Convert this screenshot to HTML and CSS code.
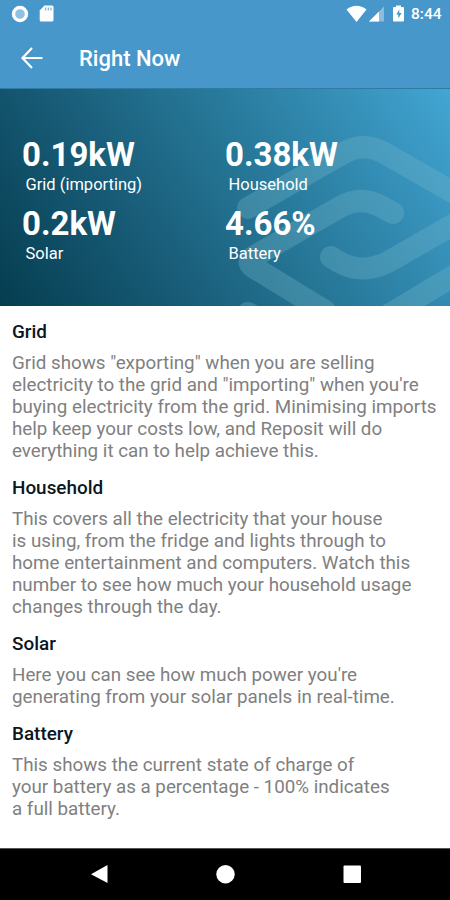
FILE: index.html
```
<!DOCTYPE html>
<html lang="en">
<head>
<meta charset="utf-8">
<title>Right Now</title>
<link rel="stylesheet" href="styles.css">
</head>
<body>
<div class="screen">
  <header class="top">
    <div class="status">
      <svg class="status-left" width="60" height="28" viewBox="0 0 60 28">
        <circle cx="20" cy="14" r="6.500" fill="#8fc1e2" stroke="#fff" stroke-width="3.400"/>
        <path d="M44.500 5.500H52q1.500 0 1.500 1.500V20q0 1.500-1.500 1.500H41.200q-1.500 0-1.500-1.500V10.500z" fill="#fff"/>
        <path d="M45.500 7.500v3M48.300 7.500v3M51 7.500v3" stroke="#80b5da" stroke-width="1.300"/>
      </svg>
      <svg class="status-right" width="65" height="28" viewBox="345 0 65 28">
        <path d="M346.500 9.500Q356.500 2 366.500 9.500L356.500 22z" fill="#fff"/>
        <path d="M384 6.500V21.500H369z" fill="#8abde0"/>
        <path d="M379 11.500V21.500H369z" fill="#fff"/>
        <path d="M396 5.500h5v1.500h2q1 0 1 1V20.500q0 1-1 1h-9q-1 0-1-1V8q0-1 1-1h2z" fill="#fff"/>
        <path d="M399.300 9.500l-3 5h2v4l3.300-5.500h-2.300z" fill="#4797cb"/>
      </svg>
      <span class="clock">8:44</span>
    </div>
    <div class="bar">
      <svg width="24" height="24" viewBox="0 0 24 24" fill="none" stroke="#fff" stroke-width="2.200">
        <path d="M23.500 12H3.500M13 2L3.500 12l9.500 10"/>
      </svg>
      <h1>Right Now</h1>
    </div>
  </header>
  <section class="hero">
    <svg class="mark" width="225" height="218" viewBox="225 88 225 218" fill="none" stroke="#75b8cc" stroke-width="22" stroke-linecap="round" stroke-linejoin="round">
      <path d="M248 208L340 155Q363 140 386 154L468 201Q480 209 468 216L388 262Q362 275 339 262L331 257"/>
      <path d="M393 213L382 207Q361 195 340 207L253 257Q246 262 253 267L325 311"/>
      <path d="M470 266L385 317M248 313L270 326"/>
    </svg>
    <div class="stats">
      <div class="stat"><b>0.19kW</b><span>Grid (importing)</span></div>
      <div class="stat"><b>0.38kW</b><span>Household</span></div>
      <div class="stat"><b>0.2kW</b><span>Solar</span></div>
      <div class="stat"><b>4.66%</b><span>Battery</span></div>
    </div>
  </section>
  <main class="info">
    <h2>Grid</h2>
    <p>Grid shows "exporting" when you are selling<br>electricity to the grid and "importing" when you're<br>buying electricity from the grid. Minimising imports<br>help keep your costs low, and Reposit will do<br>everything it can to help achieve this.</p>
    <h2>Household</h2>
    <p>This covers all the electricity that your house<br>is using, from the fridge and lights through to<br>home entertainment and computers. Watch this<br>number to see how much your household usage<br>changes through the day.</p>
    <h2>Solar</h2>
    <p>Here you can see how much power you're<br>generating from your solar panels in real-time.</p>
    <h2>Battery</h2>
    <p>This shows the current state of charge of<br>your battery as a percentage - 100% indicates<br>a full battery.</p>
  </main>
  <nav class="nav">
    <svg width="450" height="51" viewBox="0 0 450 51" fill="#fff">
      <path d="M107.500 16v18L91 25.200z"/>
      <circle cx="225.500" cy="25.200" r="9.200"/>
      <rect x="343.500" y="16.500" width="17.500" height="17.500" rx="1"/>
    </svg>
  </nav>
</div>
</body>
</html>
```
FILE: styles.css
```
* { box-sizing: border-box; margin: 0; padding: 0; }
body { font-family: Roboto, sans-serif; background: #fff; }
svg { display: block; flex: none; }
.screen { width: 450px; height: 900px; display: flex; flex-direction: column; overflow: hidden; }
.top { height: 88px; background: #4797cb; color: #fff; }
.status { height: 28px; display: flex; align-items: center; }
.status-right { margin-left: auto; }
.clock { width: 40px; padding-left: 1px; font-size: 15.500px; font-weight: 500; line-height: 29px; white-space: nowrap; }
.bar { height: 60px; display: flex; align-items: center; padding: 0 0 1px 19px; gap: 36px; }
h1 { font-size: 22px; font-weight: 500; line-height: 28px; padding-top: 2px; white-space: nowrap; }
.hero { position: relative; height: 218px; background: linear-gradient(57deg, #053d50 0%, #175a75 30%, #277899 58%, #358fb7 80%, #42a6d3 100%); color: #fff; border-top: 1px solid #2f7ba3; }
.mark { position: absolute; right: 0; top: -1px; opacity: 0.32; }
.stats { position: relative; display: grid; grid-template-columns: 203px 203px; grid-auto-rows: 69px; padding: 47px 0 0 22px; }
.stat { display: flex; flex-direction: column; white-space: nowrap; }
.stat b { font-size: 33px; line-height: 38px; font-weight: 700; }
.stat span { font-size: 16.500px; line-height: 22px; padding-left: 3.500px; }
.info { height: 542px; padding: 15px 0 0 12px; }
h2 { font-size: 18.900px; line-height: 22px; font-weight: 500; color: #0a1622; margin-bottom: 9px; }
p { font-size: 18.800px; line-height: 22.100px; color: #808080; white-space: nowrap; margin-bottom: 14.500px; }
.nav { height: 52px; background: #000; border-top: 1px solid #555; }
```
